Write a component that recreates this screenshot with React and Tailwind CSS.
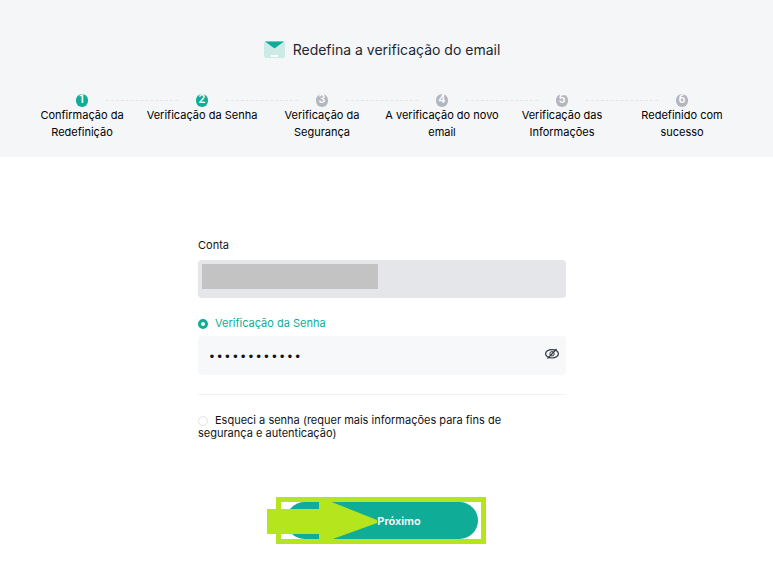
import { useState } from "react";

const steps = [
    "Confirmação da Redefinição",
    "Verificação da Senha",
    "Verificação da Segurança",
    "A verificação do novo email",
    "Verificação das Informações",
    "Redefinido com sucesso",
];

function MailIcon() {
    return (
        <svg className="mb-[2px]" width="21" height="17" viewBox="0 0 21 17" aria-hidden="true">
            <rect width="21" height="17" rx="2" fill="#cdebe6" />
            <path d="M1 .5h19l-8.500 6.300q-1 .7-2 0z" fill="#0fad98" />
            <rect x="7" y="14" width="7" height="2" fill="#fff" />
        </svg>
    );
}

function EyeOffIcon() {
    return (
        <svg width="14" height="12" viewBox="0 0 14 12" fill="none" stroke="#303540" aria-hidden="true">
            <ellipse cx="7" cy="5.800" rx="6.400" ry="4.200" strokeWidth="1.200" />
            <circle cx="7" cy="5.800" r="2.200" />
            <path d="M2.500 10.700 11.500 1" strokeWidth="1.200" />
        </svg>
    );
}

function Step({ number, label, active, last }) {
    return (
        <li className="w-[120px] min-w-0">
            <div className="ml-[calc(50%-6px)] -mr-[calc(50%-6px)] flex items-center gap-[18px] pr-[18px]">
                <span
                    className={`flex h-[13px] w-3 shrink-0 justify-center rounded-full font-['Roboto',sans-serif] text-[12px] leading-[11px] font-medium text-white ${active ? "bg-[#0fad98]" : "bg-[#b4b6bf]"}`}
                >
                    {number}
                </span>
                {!last && <span className="flex-1 border-t border-dashed border-[#e3e4e8]"></span>}
            </div>
            <p className="text-center text-[11px] leading-[17px]">{label}</p>
        </li>
    );
}

export default function ResetEmailPage() {
    const [method, setMethod] = useState("password");
    const [visible, setVisible] = useState(false);

    const radioClass =
        "mr-[7px] inline-block h-[10px] w-[10px] appearance-none rounded-full border border-[#e3e4e8] bg-white align-[-2px] checked:border-[3px] checked:border-[#0fad98]";

    return (
        <div className="min-h-screen bg-white font-['Inter',sans-serif] text-[#111318]">
            <header className="bg-[#f5f6f8] pt-10 pr-[9px] pb-4">
                <h1 className="flex items-center justify-center gap-2 text-sm leading-5 text-[#23262f]">
                    <MailIcon />
                    Redefina a verificação do email
                </h1>
                <ol className="mt-[26px] flex justify-center overflow-hidden pt-2 text-black">
                    {steps.map((label, i) => (
                        <Step key={label} number={i + 1} label={label} active={i < 2} last={i === steps.length - 1} />
                    ))}
                </ol>
            </header>

            <main className="pt-20 pr-[9px]">
                <form className="mx-auto w-full max-w-[368px] text-[11px]" onSubmit={(e) => e.preventDefault()}>
                    <label htmlFor="account" className="block leading-4">Conta</label>
                    <div className="relative mt-[7px]">
                        <input id="account" type="text" disabled className="block h-[38px] w-full rounded-sm bg-[#e5e6ea] px-3" />
                        <span className="absolute top-1 left-1 h-[25px] w-44 bg-[#c3c3c3]"></span>
                    </div>

                    <label className="mt-[17px] block leading-4 text-[#0fad98]">
                        <input
                            type="radio"
                            name="method"
                            className={radioClass}
                            checked={method === "password"}
                            onChange={() => setMethod("password")}
                        />
                        Verificação da Senha
                    </label>
                    <div className="mt-[5px] flex h-[39px] items-center rounded-sm bg-[#f7f8fa] pr-[7px] pl-[10px]">
                        <input
                            type={visible ? "text" : "password"}
                            aria-label="Senha"
                            defaultValue="abcdefghijkl"
                            className="min-w-0 flex-1 bg-transparent pt-1 font-['Liberation_Mono',monospace] text-[13px] outline-none"
                        />
                        <button type="button" className="mb-1" aria-label="Mostrar senha" onClick={() => setVisible(!visible)}>
                            <EyeOffIcon />
                        </button>
                    </div>

                    <hr className="mt-[19px] border-[#f0f1f3]" />

                    <label className="mt-[19px] block pr-10 leading-[13px]">
                        <input
                            type="radio"
                            name="method"
                            className={radioClass}
                            checked={method === "forgot"}
                            onChange={() => setMethod("forgot")}
                        />
                        Esqueci a senha (requer mais informações para fins de segurança e autenticação)
                    </label>

                    <div className="relative mx-auto mt-[62px] w-48">
                        <button type="submit" className="block h-[37px] w-full rounded-full bg-[#0fad98] pt-px pl-[34px] text-[11px] font-semibold text-white">
                            Próximo
                        </button>
                        <span className="pointer-events-none absolute -top-[5px] -right-2 -bottom-[5px] -left-[10px] border-[5px] border-[#b5e61d]"></span>
                        <svg className="pointer-events-none absolute -top-[5px] -left-[19px]" width="112" height="47" viewBox="0 0 112 47" aria-hidden="true">
                            <path d="M0 12h52V0l58 23v3L52 47V37H0z" fill="#b5e61d" />
                        </svg>
                    </div>
                </form>
            </main>
        </div>
    );
}
